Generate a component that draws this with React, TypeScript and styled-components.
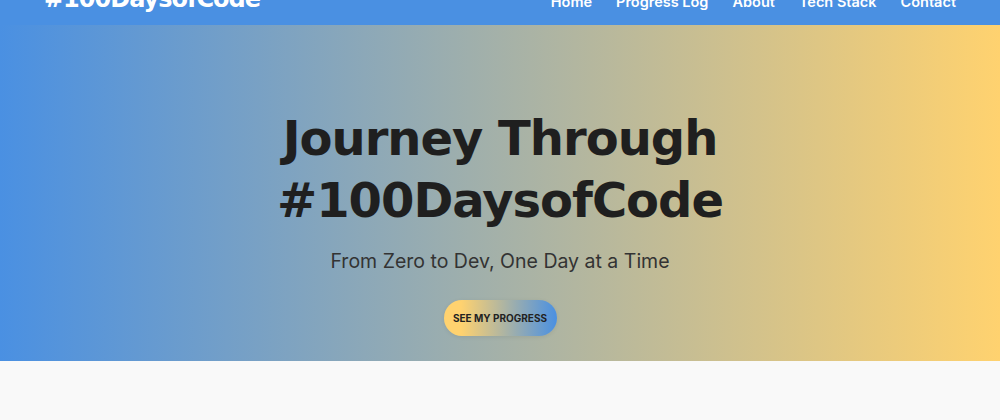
import styled, { createGlobalStyle } from "styled-components";

const navLinks = ["Home", "Progress Log", "About", "Tech Stack", "Contact"];

export default function App() {
	return (
		<Page>
			<GlobalStyle />
			<Header>
				<Logo>#100DaysofCode</Logo>
				<Nav>
					{navLinks.map((link) => (
						<NavLink key={link} href="#">
							{link}
						</NavLink>
					))}
				</Nav>
			</Header>

			<Hero>
				<Title>
					Journey Through
					<br />
					#100DaysofCode
				</Title>
				<Subtitle>From Zero to Dev, One Day at a Time</Subtitle>
				<CtaButton>SEE MY PROGRESS</CtaButton>
			</Hero>

			<Section />
		</Page>
	);
}

const GlobalStyle = createGlobalStyle`
	* {
		box-sizing: border-box;
	}

	body {
		margin: 0;
		background-color: #f9f9f9;
		font-family: "Inter", "Open Sans", sans-serif;
		color: #333;
	}
`;

const Page = styled.div`
	width: 100%;
	min-height: 420px;
	display: flex;
	flex-direction: column;
`;

const Header = styled.header`
	height: 25px;
	padding: 0 44px;
	overflow: hidden;

	display: flex;
	justify-content: space-between;
	align-items: flex-end;

	background-color: #4a90e2;
	color: #fff;
`;

const Logo = styled.h1`
	margin: 0 0 14px;
	font-family: "DejaVu Sans", sans-serif;
	font-size: 24px;
	font-weight: 700;
	line-height: 1;
	letter-spacing: -1px;
	white-space: nowrap;
`;

const Nav = styled.nav`
	display: flex;
	gap: 24px;
	margin-bottom: 16px;
`;

const NavLink = styled.a`
	font-family: "Inter", sans-serif;
	font-size: 14.5px;
	font-weight: 600;
	line-height: 1;
	color: #fff;
	text-decoration: none;
	white-space: nowrap;
`;

const Hero = styled.section`
	height: 336px;
	padding-top: 82px;

	display: flex;
	flex-direction: column;
	align-items: center;

	background: linear-gradient(90deg, #4a90e2 0%, #ffd26f 100%);
	text-align: center;
`;

const Title = styled.h2`
	margin: 0;
	font-family: "DejaVu Sans", sans-serif;
	font-size: 48px;
	font-weight: 700;
	line-height: 62px;
	letter-spacing: -1px;
	color: #1f1f1f;
`;

const Subtitle = styled.p`
	margin: 18px 0 0;
	font-family: "Inter", sans-serif;
	font-size: 19.5px;
	font-weight: 400;
	color: #333;
`;

const CtaButton = styled.button`
	margin-top: 27px;
	height: 36px;
	width: 113px;
	padding: 0;
	border: none;
	border-radius: 18px;

	background: linear-gradient(90deg, #ffd26f 0%, #ffd26f 15%, #4a90e2 100%);
	box-shadow: 0 1px 4px rgba(0, 0, 0, 0.08);

	font-family: "Inter", sans-serif;
	font-size: 10px;
	font-weight: 700;
	color: #222;
	cursor: pointer;
`;

const Section = styled.section`
	flex: 1;
	background-color: #f9f9f9;
`;
